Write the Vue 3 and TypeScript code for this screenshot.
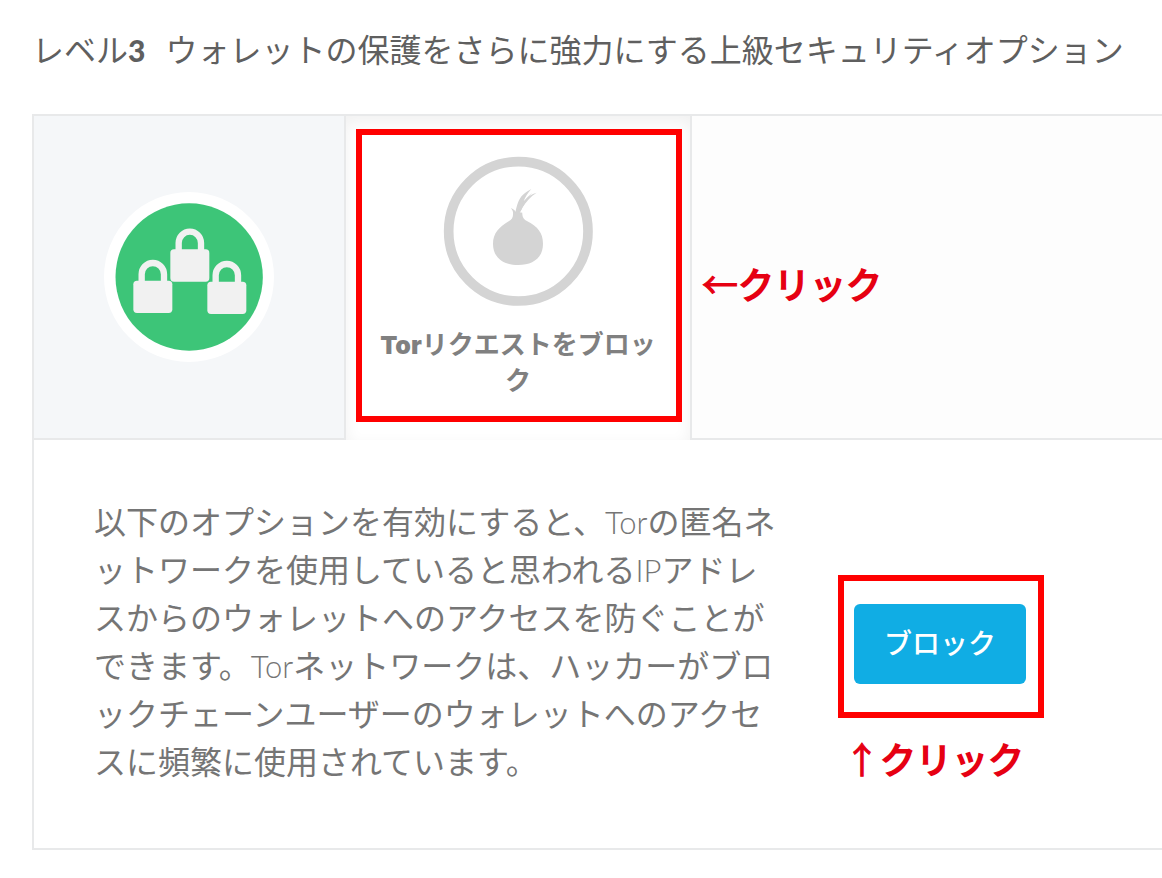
<script setup lang="ts">
import { ref } from 'vue'

interface Lock {
  x: number
  y: number
}

const locks: Lock[] = [
  { x: 0, y: 0 },
  { x: -111, y: 94 },
  { x: 111, y: 97 },
]
const torBlocked = ref(false)
</script>

<template>
  <main class="page">
    <h1 class="title">
      <span>レベル<b>3</b></span>
      <span>ウォレットの保護をさらに強力にする上級セキュリティオプション</span>
    </h1>

    <section class="panel">
      <div class="steps">
        <div class="step level">
          <svg class="badge" viewBox="42 36 510 510" role="img" aria-label="セキュリティレベル3">
            <circle cx="297" cy="291" r="255" fill="#fff" />
            <circle cx="297.500" cy="291" r="221" fill="#3dc578" />
            <g v-for="(lock, i) in locks" :key="i" :transform="`translate(${lock.x} ${lock.y})`">
              <rect x="241" y="208" width="117" height="97" rx="11" fill="#f1f1f1" />
              <path d="M266 214V189a33.500 34 0 0 1 67 0V214" fill="none" stroke="#f1f1f1" stroke-width="19" />
            </g>
          </svg>
        </div>

        <div class="step active">
          <button type="button" class="tab">
            <svg class="ring" viewBox="310 168 450 450" aria-hidden="true">
              <circle cx="536" cy="394" r="209" fill="none" stroke="#d4d4d4" stroke-width="29" />
              <g transform="translate(420 240)" fill="#d4d4d4">
                <path d="M100 99C101 95 97 89 94 84C99 86 103 89 106 92L108 95L120 97L128 98C127 111 132 118 143 124C174 140 190 159 190 191C190 232 162 255 115 255C68 255 40 231 40 191C40 161 58 141 87 124C97 118 101 111 100 99Z" />
                <path d="M107 98C111 76 117 56 130 44C138 37 147 32 155 27C144 40 137 50 132 64C142 51 156 42 171 38C153 49 139 66 128 83L120 99Z" />
                <path d="M116 94C122 74 139 55 158 38C144 55 132 72 123 94Z" />
              </g>
            </svg>
            <span class="tab-label"><span class="tab-latin">Tor</span>リクエストをブロッ<br>ク</span>
          </button>
          <span class="frame tab-frame"></span>
        </div>

        <div class="step rest">
          <span class="hint"><span class="arrow">←</span>クリック</span>
        </div>
      </div>

      <div class="detail">
        <p class="description">
          以下のオプションを有効にすると、<span class="latin">Tor</span>の匿名ネ<br>
          ットワークを使用していると思われる<span class="latin">IP</span>アドレ<br>
          スからのウォレットへのアクセスを防ぐことが<br>
          できます。<span class="latin">Tor</span>ネットワークは、ハッカーがブロ<br>
          ックチェーンユーザーのウォレットへのアクセ<br>
          スに頻繁に使用されています。
        </p>
        <div class="action">
          <button type="button" class="block" :aria-pressed="torBlocked" @click="torBlocked = !torBlocked">ブロック</button>
          <span class="frame block-frame"></span>
          <span class="hint block-hint"><span class="arrow">↑</span>クリック</span>
        </div>
      </div>
    </section>
  </main>
</template>

<style>
body {
  margin: 0;
  background: #fff;
}
</style>

<style scoped>
.page {
  padding: 26px 0 28px 32px;
  overflow: hidden;
  font-family: Lato, "Noto Sans CJK JP", sans-serif;
  color: #757575;
}
.title {
  display: flex;
  gap: 20px;
  margin: 0 0 40px;
  font-size: 32px;
  line-height: 48px;
  font-weight: 400;
  white-space: nowrap;
  color: #5f5f5f;
}
.title b {
  font-size: 30px;
  font-weight: 900;
}
.panel {
  border: 2px solid #e8e9ea;
  border-right: 0;
}
.steps {
  display: grid;
  grid-template-columns: 312px 344px 1fr;
}
.step {
  box-sizing: border-box;
  position: relative;
  min-height: 324px;
}
.level {
  display: flex;
  align-items: center;
  justify-content: center;
  background: #f5f7f9;
  border-right: 2px solid #e8e9ea;
  border-bottom: 2px solid #e8e9ea;
}
.badge {
  width: 170px;
  height: 170px;
}
.active {
  box-shadow: inset 0 6px 16px rgba(0, 0, 0, 0.06);
}
.tab {
  display: flex;
  flex-direction: column;
  align-items: center;
  gap: 20px;
  width: 100%;
  padding: 40px 0;
  border: 0;
  background: none;
  font: 700 26px/36px Lato, "Noto Sans CJK JP", sans-serif;
  color: #808080;
  cursor: pointer;
}
.tab-latin {
  font-family: Inter, sans-serif;
  font-size: 25px;
  line-height: 1;
  font-weight: 900;
}
.ring {
  width: 150px;
  height: 150px;
}
.rest {
  display: flex;
  align-items: center;
  padding: 12px 0 0 10px;
  background: #fdfdfd;
  border-left: 2px solid #e8e9ea;
  border-bottom: 2px solid #e8e9ea;
}
.frame {
  position: absolute;
  box-sizing: border-box;
  border: 6px solid #f00;
  pointer-events: none;
}
.tab-frame {
  inset: 13px 8px 18px 10px;
}
.hint {
  font: 400 36px/48px "Noto Sans CJK JP", sans-serif;
  color: #e60012;
  white-space: nowrap;
  -webkit-text-stroke: 2px #e60012;
  stroke-linejoin: round;
}
.arrow {
  -webkit-text-stroke: 1px #e60012;
}
.detail {
  display: flex;
  align-items: center;
  gap: 72px;
  padding: 58px 60px 62px;
}
.description {
  flex: 0 0 688px;
  margin: 0;
  font-size: 32px;
  line-height: 48px;
  white-space: nowrap;
}
.latin {
  font-size: 31px;
  font-weight: 300;
}
.action {
  position: relative;
  margin-top: 4px;
}
.block {
  display: block;
  width: 172px;
  height: 80px;
  padding: 0 0 4px;
  border: 0;
  border-radius: 6px;
  background: #10ade4;
  color: #fff;
  font: 500 28px/36px "Noto Sans CJK JP", sans-serif;
  cursor: pointer;
}
.block-frame {
  inset: -29px -18px -34px -16px;
}
.block-hint {
  position: absolute;
  top: 130px;
  left: -10px;
}
</style>
